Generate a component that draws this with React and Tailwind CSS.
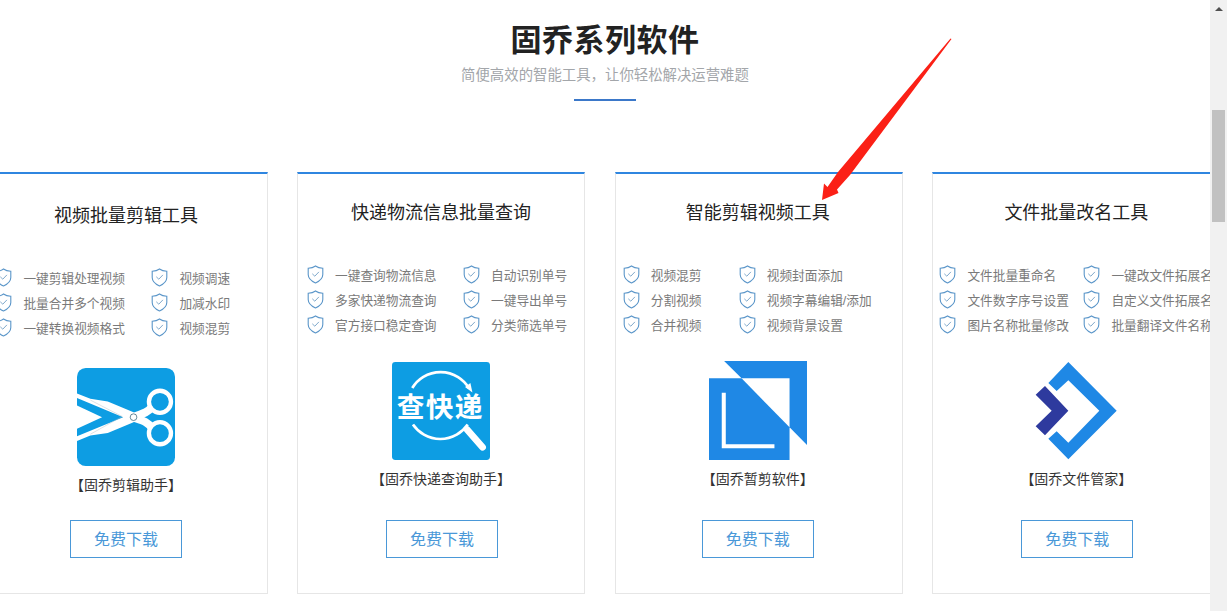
import React from "react";

const ShieldIcon = () => (
  <svg width="17" height="19" viewBox="0 0 17 19" fill="none" className="shrink-0">
    <path d="M8.5 1 C6.5 2.5 4 3.2 1.2 3.3 V9.5 C1.2 13.3 4.4 16.1 8.5 18 C12.6 16.1 15.8 13.3 15.8 9.5 V3.3 C13 3.2 10.5 2.5 8.5 1 Z" stroke="#5b96c9" strokeWidth="1.1" />
    <path d="M5.3 8.8 L7.8 11.2 L11.9 6.9" stroke="#7fa9cc" strokeWidth="1" />
  </svg>
);

const ScissorsLogo = () => (
  <svg width="98" height="98" viewBox="0 0 293 293">
    <rect width="293" height="293" rx="26" fill="#0d9de3" />
    <path d="M0 76 L40 92 L92 100 L169 132 L175 147 L169 162 L92 194 L40 202 L0 218 L0 204 L138 147 L0 90 Z" fill="#fff" />
    <path d="M0 112 L75 147 L0 182 Z" fill="#fff" />
    <path d="M40 96 L135 145 L40 198" stroke="#aab6bd" strokeWidth="1.2" fill="none" />
    <path d="M165 147 C195 137 210 135 224 116" stroke="#fff" strokeWidth="24" fill="none" />
    <path d="M165 147 C195 157 210 159 224 180" stroke="#fff" strokeWidth="24" fill="none" />
    <circle cx="248" cy="101" r="33" stroke="#fff" strokeWidth="13" fill="#0d9de3" />
    <circle cx="248" cy="195" r="33" stroke="#fff" strokeWidth="13" fill="#0d9de3" />
    <circle cx="169" cy="147" r="10" fill="#fff" stroke="#4a7286" strokeWidth="2.5" />
  </svg>
);

const ExpressLogo = () => (
  <svg width="98" height="98" viewBox="0 0 290 290">
    <rect width="290" height="290" rx="10" fill="#0d9de3" />
    <path d="M60 77 A98 98 0 0 1 228 78" stroke="#fff" strokeWidth="8" fill="none" />
    <path d="M62 185 A98 98 0 0 0 224 185" stroke="#fff" strokeWidth="8" fill="none" />
    <path d="M232 62 L238 90 L216 74 Z" fill="#fff" />
    <path d="M222 200 L268 252" stroke="#fff" strokeWidth="20" strokeLinecap="round" />
    <text x="143" y="163" textAnchor="middle" fill="#fff" fontSize="82" letterSpacing="4" fontWeight="700" fontFamily="'Noto Sans CJK SC', sans-serif">查快递</text>
  </svg>
);

const ClipLogo = () => (
  <svg width="98" height="99" viewBox="58 33 292 297" preserveAspectRatio="none">
    <path d="M103 33 H350 V285 L298 232 V85 H155 Z" fill="#1f88e5" />
    <path d="M58 85 H155 L298 232 V330 H58 Z" fill="#1f88e5" />
    <path d="M96 128 H108 V283 H253 V295 H96 Z" fill="#fff" />
  </svg>
);

const FileLogo = () => (
  <svg width="98" height="98" viewBox="51 35 294 294">
    <path d="M175 35 L320 181 L175 327 L115 265 L140 243 L175 277 L268 181 L175 90 L140 122 L115 98 Z" fill="#1f88e5" />
    <path d="M105 107 L175 181 L105 255 L77 228 L125 181 L77 133 Z" fill="#2e3a9e" />
  </svg>
);

const cards = [
  {
    title: "视频批量剪辑工具",
    left: ["一键剪辑处理视频", "批量合并多个视频", "一键转换视频格式"],
    right: ["视频调速", "加减水印", "视频混剪"],
    caption: "【固乔剪辑助手】",
    logo: <ScissorsLogo />,
    cardClass: "w-[290px] -mr-[1px] pl-[5px]",
    titleClass: "pt-[29px]",
    listClass: "mt-[37px] pl-[11px] grid-cols-[156px_1fr]",
    logoClass: "mt-[26px] h-[98px]",
    buttonClass: "mt-[25px]",
  },
  {
    title: "快递物流信息批量查询",
    left: ["一键查询物流信息", "多家快递物流查询", "官方接口稳定查询"],
    right: ["自动识别单号", "一键导出单号", "分类筛选单号"],
    caption: "【固乔快递查询助手】",
    logo: <ExpressLogo />,
    cardClass: "w-[288px]",
    titleClass: "pt-[26px]",
    listClass: "mt-[37px] pl-[9px] grid-cols-[156px_1fr]",
    logoClass: "mt-[23px] h-[98px]",
    buttonClass: "mt-[31px] ml-[2px]",
  },
  {
    title: "智能剪辑视频工具",
    left: ["视频混剪", "分割视频", "合并视频"],
    right: ["视频封面添加", "视频字幕编辑/添加", "视频背景设置"],
    caption: "【固乔暂剪软件】",
    logo: <ClipLogo />,
    cardClass: "w-[288px] pr-[2px]",
    titleClass: "pt-[26px]",
    listClass: "mt-[37px] pl-[7px] grid-cols-[116px_1fr]",
    logoClass: "mt-[22px] h-[99px]",
    buttonClass: "mt-[31px]",
  },
  {
    title: "文件批量改名工具",
    left: ["文件批量重命名", "文件数字序号设置", "图片名称批量修改"],
    right: ["一键改文件拓展名", "自定义文件拓展名", "批量翻译文件名称"],
    caption: "【固乔文件管家】",
    logo: <FileLogo />,
    cardClass: "w-[288px]",
    titleClass: "pt-[26px]",
    listClass: "mt-[37px] pl-[6px] grid-cols-[144px_1fr]",
    logoClass: "mt-[23px] h-[98px]",
    buttonClass: "mt-[31px] ml-[2px]",
  },
];

const FeatureItem = ({ text }) => (
  <div className="flex items-center h-[25px] whitespace-nowrap">
    <div className="w-[28px] shrink-0 -mt-[4px]">
      <ShieldIcon />
    </div>
    <span className="text-[12.7px] text-[#7a7a7a]">{text}</span>
  </div>
);

const ProductCard = ({ card }) => (
  <div className={`${card.cardClass} h-[422px] shrink-0 bg-white border border-[#e6e6e6] border-t-2 border-t-[#2f86e0] flex flex-col items-center`}>
    <h3 className={`${card.titleClass} text-[18px] leading-[27px] font-normal text-[#222]`}>{card.title}</h3>
    <div className={`${card.listClass} w-full grid`}>
      <div>
        {card.left.map((t) => (
          <FeatureItem key={t} text={t} />
        ))}
      </div>
      <div>
        {card.right.map((t) => (
          <FeatureItem key={t} text={t} />
        ))}
      </div>
    </div>
    <div className={card.logoClass}>{card.logo}</div>
    <div className="mt-[9px] text-[14px] leading-[20px] text-[#333]">{card.caption}</div>
    <button className={`${card.buttonClass} w-[112px] h-[38px] pt-[1px] border border-[#4a98d8] text-[16px] text-[#4a98d8] bg-white`}>免费下载</button>
  </div>
);

export default function App() {
  return (
    <div className="relative flex w-full h-[611px] overflow-hidden bg-white font-['Liberation_Sans','Noto_Sans_CJK_SC',sans-serif]">
      <main className="flex-1 min-w-0 overflow-hidden flex flex-col items-center">
        <h1 className="mt-[21px] text-[31px] leading-[40px] font-bold tracking-[0.5px] text-[#222]">固乔系列软件</h1>
        <p className="mt-[4px] text-[14.4px] leading-[20px] text-[#a3a6aa]">简便高效的智能工具，让你轻松解决运营难题</p>
        <div className="mt-[14px] w-[62px] h-[2px] bg-[#3b78c9]" />
        <div className="mt-[71px] self-start flex gap-[29.67px] -ml-[21.6px]">
          {cards.map((card) => (
            <ProductCard key={card.title} card={card} />
          ))}
        </div>
      </main>

      {/* page scrollbar */}
      <div className="w-[17px] shrink-0 bg-[#f1f1f1] flex flex-col items-center">
        <div className="mt-[7px] w-0 h-0 border-x-[4px] border-x-transparent border-b-[4px] border-b-[#505050]" />
        <div className="mt-[99px] w-[13px] h-[112px] bg-[#c1c1c1]" />
      </div>

      {/* red annotation arrow */}
      <svg className="absolute left-0 top-0 pointer-events-none" width="1227" height="611" fill="none">
        <path d="M951.5 39 L850 175 L837 189.5 L838.5 193 L822 200 L824 183.5 L827.5 187 L838 172 L950.5 38.5 Z" fill="#fb2016" />
      </svg>
    </div>
  );
}
